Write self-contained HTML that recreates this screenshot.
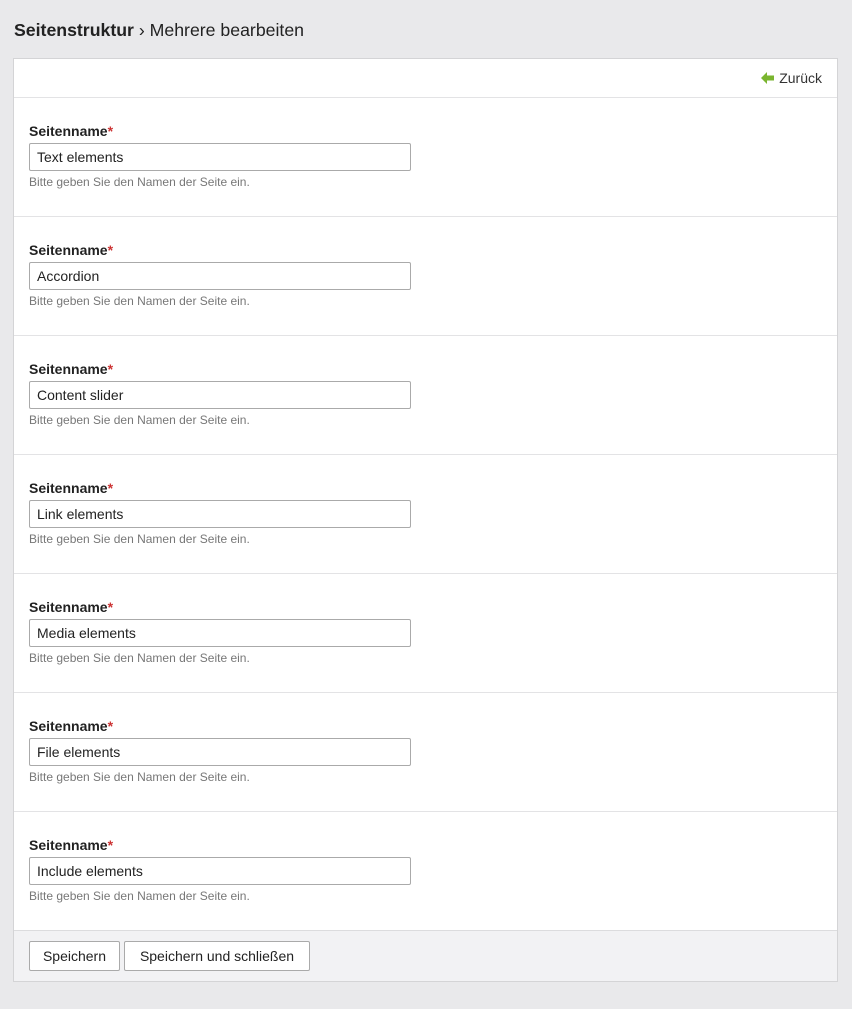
<!DOCTYPE html>
<html><head><meta charset="utf-8"><style>
body{margin:0;background:#e9e9eb;font-family:"Liberation Sans",Arial,sans-serif;color:#222;width:852px;height:1009px;overflow:hidden}
h1{position:absolute;left:14px;top:19px;margin:0;font-size:17.7px;font-weight:normal;line-height:22px;color:#222}
h1 b{font-weight:bold}
.panel{position:absolute;left:13px;top:58px;width:823px;height:922px;background:#fff;border:1px solid #d4d4d6}
.head{height:38px;border-bottom:1px solid #e3e3e5;position:relative}
.back{position:absolute;right:15px;top:11px;font-size:14px;color:#333}
.back svg{vertical-align:-1px;margin-right:4px}
.sec{height:118px;border-bottom:1px solid #e3e3e5;position:relative}
.lab{position:absolute;left:15px;top:25px;font-size:14px;font-weight:bold;color:#222}
.lab span{color:#c33}
.inp{position:absolute;left:15px;top:45px;width:373px;height:26px;border:1px solid #aaa;border-radius:2px;font-size:14px;line-height:26px;padding-left:7px;color:#222}
.help{position:absolute;left:15px;top:77px;font-size:12px;color:#777}
.foot{position:absolute;left:0;right:0;bottom:0;height:50px;background:#f2f2f4;border-top:1px solid #dcdcde}
.btn{position:absolute;top:10px;height:28px;border:1px solid #aaa;border-radius:2px;background:#fff;font-size:14px;line-height:28px;text-align:center;color:#222}
</style></head><body>
<h1><b>Seitenstruktur</b> › Mehrere bearbeiten</h1>
<div class="panel">
<div class="head"><div class="back"><svg width="14" height="12" viewBox="0 0 14 12"><path d="M0 6L6 0V3.5H13V8.5H6V12Z" fill="#7ab52f"/></svg>Zurück</div></div>
<div class="sec"><div class="lab">Seitenname<span>*</span></div><div class="inp">Text elements</div><div class="help">Bitte geben Sie den Namen der Seite ein.</div></div>
<div class="sec"><div class="lab">Seitenname<span>*</span></div><div class="inp">Accordion</div><div class="help">Bitte geben Sie den Namen der Seite ein.</div></div>
<div class="sec"><div class="lab">Seitenname<span>*</span></div><div class="inp">Content slider</div><div class="help">Bitte geben Sie den Namen der Seite ein.</div></div>
<div class="sec"><div class="lab">Seitenname<span>*</span></div><div class="inp">Link elements</div><div class="help">Bitte geben Sie den Namen der Seite ein.</div></div>
<div class="sec"><div class="lab">Seitenname<span>*</span></div><div class="inp">Media elements</div><div class="help">Bitte geben Sie den Namen der Seite ein.</div></div>
<div class="sec"><div class="lab">Seitenname<span>*</span></div><div class="inp">File elements</div><div class="help">Bitte geben Sie den Namen der Seite ein.</div></div>
<div class="sec" style="border-bottom:none"><div class="lab">Seitenname<span>*</span></div><div class="inp">Include elements</div><div class="help">Bitte geben Sie den Namen der Seite ein.</div></div>
<div class="foot"><div class="btn" style="left:15px;width:89px">Speichern</div><div class="btn" style="left:110px;width:184px">Speichern und schließen</div></div>
</div>
</body></html>
